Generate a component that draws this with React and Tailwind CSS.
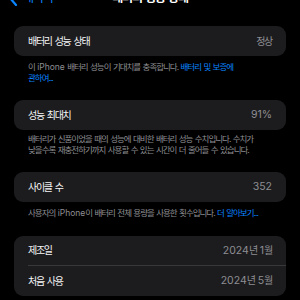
import React from "react";

const font = { fontFamily: '"Inter", "Noto Sans CJK KR", sans-serif' };

const Row = ({ label, value, divider }) => (
  <div className="flex h-[30px] pl-[14px]">
    <div
      className={
        "flex flex-1 items-center justify-between pr-[14px] " +
        (divider ? "border-b border-[#38383a]" : "")
      }
    >
      <span className="text-[10px] tracking-[-1.3px] [word-spacing:1.5px] text-[#f5f5f7]">
        {label}
      </span>
      <span className="text-[10px] tracking-[-1.3px] [word-spacing:1.5px] text-[#8e8e93]">
        {value}
      </span>
    </div>
  </div>
);

const Card = ({ children, className = "" }) => (
  <div className={"mx-[14px] rounded-[9px] bg-[#1c1c1e] " + className}>{children}</div>
);

const Note = ({ children, className = "" }) => (
  <p
    className={
      "mx-[28px] whitespace-nowrap text-[8.5px] leading-[11px] tracking-[-1px] [word-spacing:1px] text-[#8e8e93] " +
      className
    }
  >
    {children}
  </p>
);

const Num = ({ children }) => (
  <span className="text-[10.5px] tracking-normal">{children}</span>
);

export default function App() {
  return (
    <div className="h-[300px] w-[300px] overflow-hidden bg-black" style={font}>
      {/* Header (scrolled, mostly cut off) */}
      <div className="relative -mt-[12px] flex h-[20px] items-center justify-center">
        <div className="absolute left-[8px] top-0 flex h-full items-center gap-[5px] text-[#0a84ff]">
          <svg width="10" height="16" viewBox="0 0 10 16">
            <polyline
              points="8,1 2,8 8,15"
              fill="none"
              stroke="#0a84ff"
              strokeWidth="2.2"
              strokeLinecap="round"
              strokeLinejoin="round"
            />
          </svg>
          <span className="text-[12px] tracking-[-1.2px]">배터리</span>
        </div>
        <span className="text-[12px] font-semibold tracking-[-1.2px] [word-spacing:1.5px] text-white">
          배터리 성능 상태
        </span>
      </div>

      {/* Battery health */}
      <Card className="mt-[18px]">
        <Row label="배터리 성능 상태" value="정상" />
      </Card>
      <Note className="mt-[6px]">
        이 <span className="tracking-normal">iPhone</span> 배터리 성능이 기대치를 충족합니다.{" "}
        <span className="text-[#0a84ff]">배터리 및 보증에</span>
        <br />
        <span className="text-[#0a84ff]">관하여...</span>
      </Note>

      {/* Maximum capacity */}
      <Card className="mt-[16px]">
        <Row label="성능 최대치" value={<Num>91%</Num>} />
      </Card>
      <Note className="mt-[4px]">
        배터리가 신품이었을 때의 성능에 대비한 배터리 성능 수치입니다. 수치가
        <br />
        낮을수록 재충전하기까지 사용할 수 있는 시간이 더 줄어들 수 있습니다.
      </Note>

      {/* Cycle count */}
      <Card className="mt-[16px]">
        <Row label="사이클 수" value={<Num>352</Num>} />
      </Card>
      <Note className="mt-[6px]">
        사용자의 <span className="tracking-normal">iPhone</span>이 배터리 전체 용량을 사용한 횟수입니다.{" "}
        <span className="text-[#0a84ff]">더 알아보기...</span>
      </Note>

      {/* Dates */}
      <Card className="mt-[17px]">
        <Row
          label="제조일"
          value={
            <>
              <Num>2024</Num>년 <Num>1</Num>월
            </>
          }
          divider
        />
        <Row
          label="처음 사용"
          value={
            <>
              <Num>2024</Num>년 <Num>5</Num>월
            </>
          }
        />
      </Card>
    </div>
  );
}
